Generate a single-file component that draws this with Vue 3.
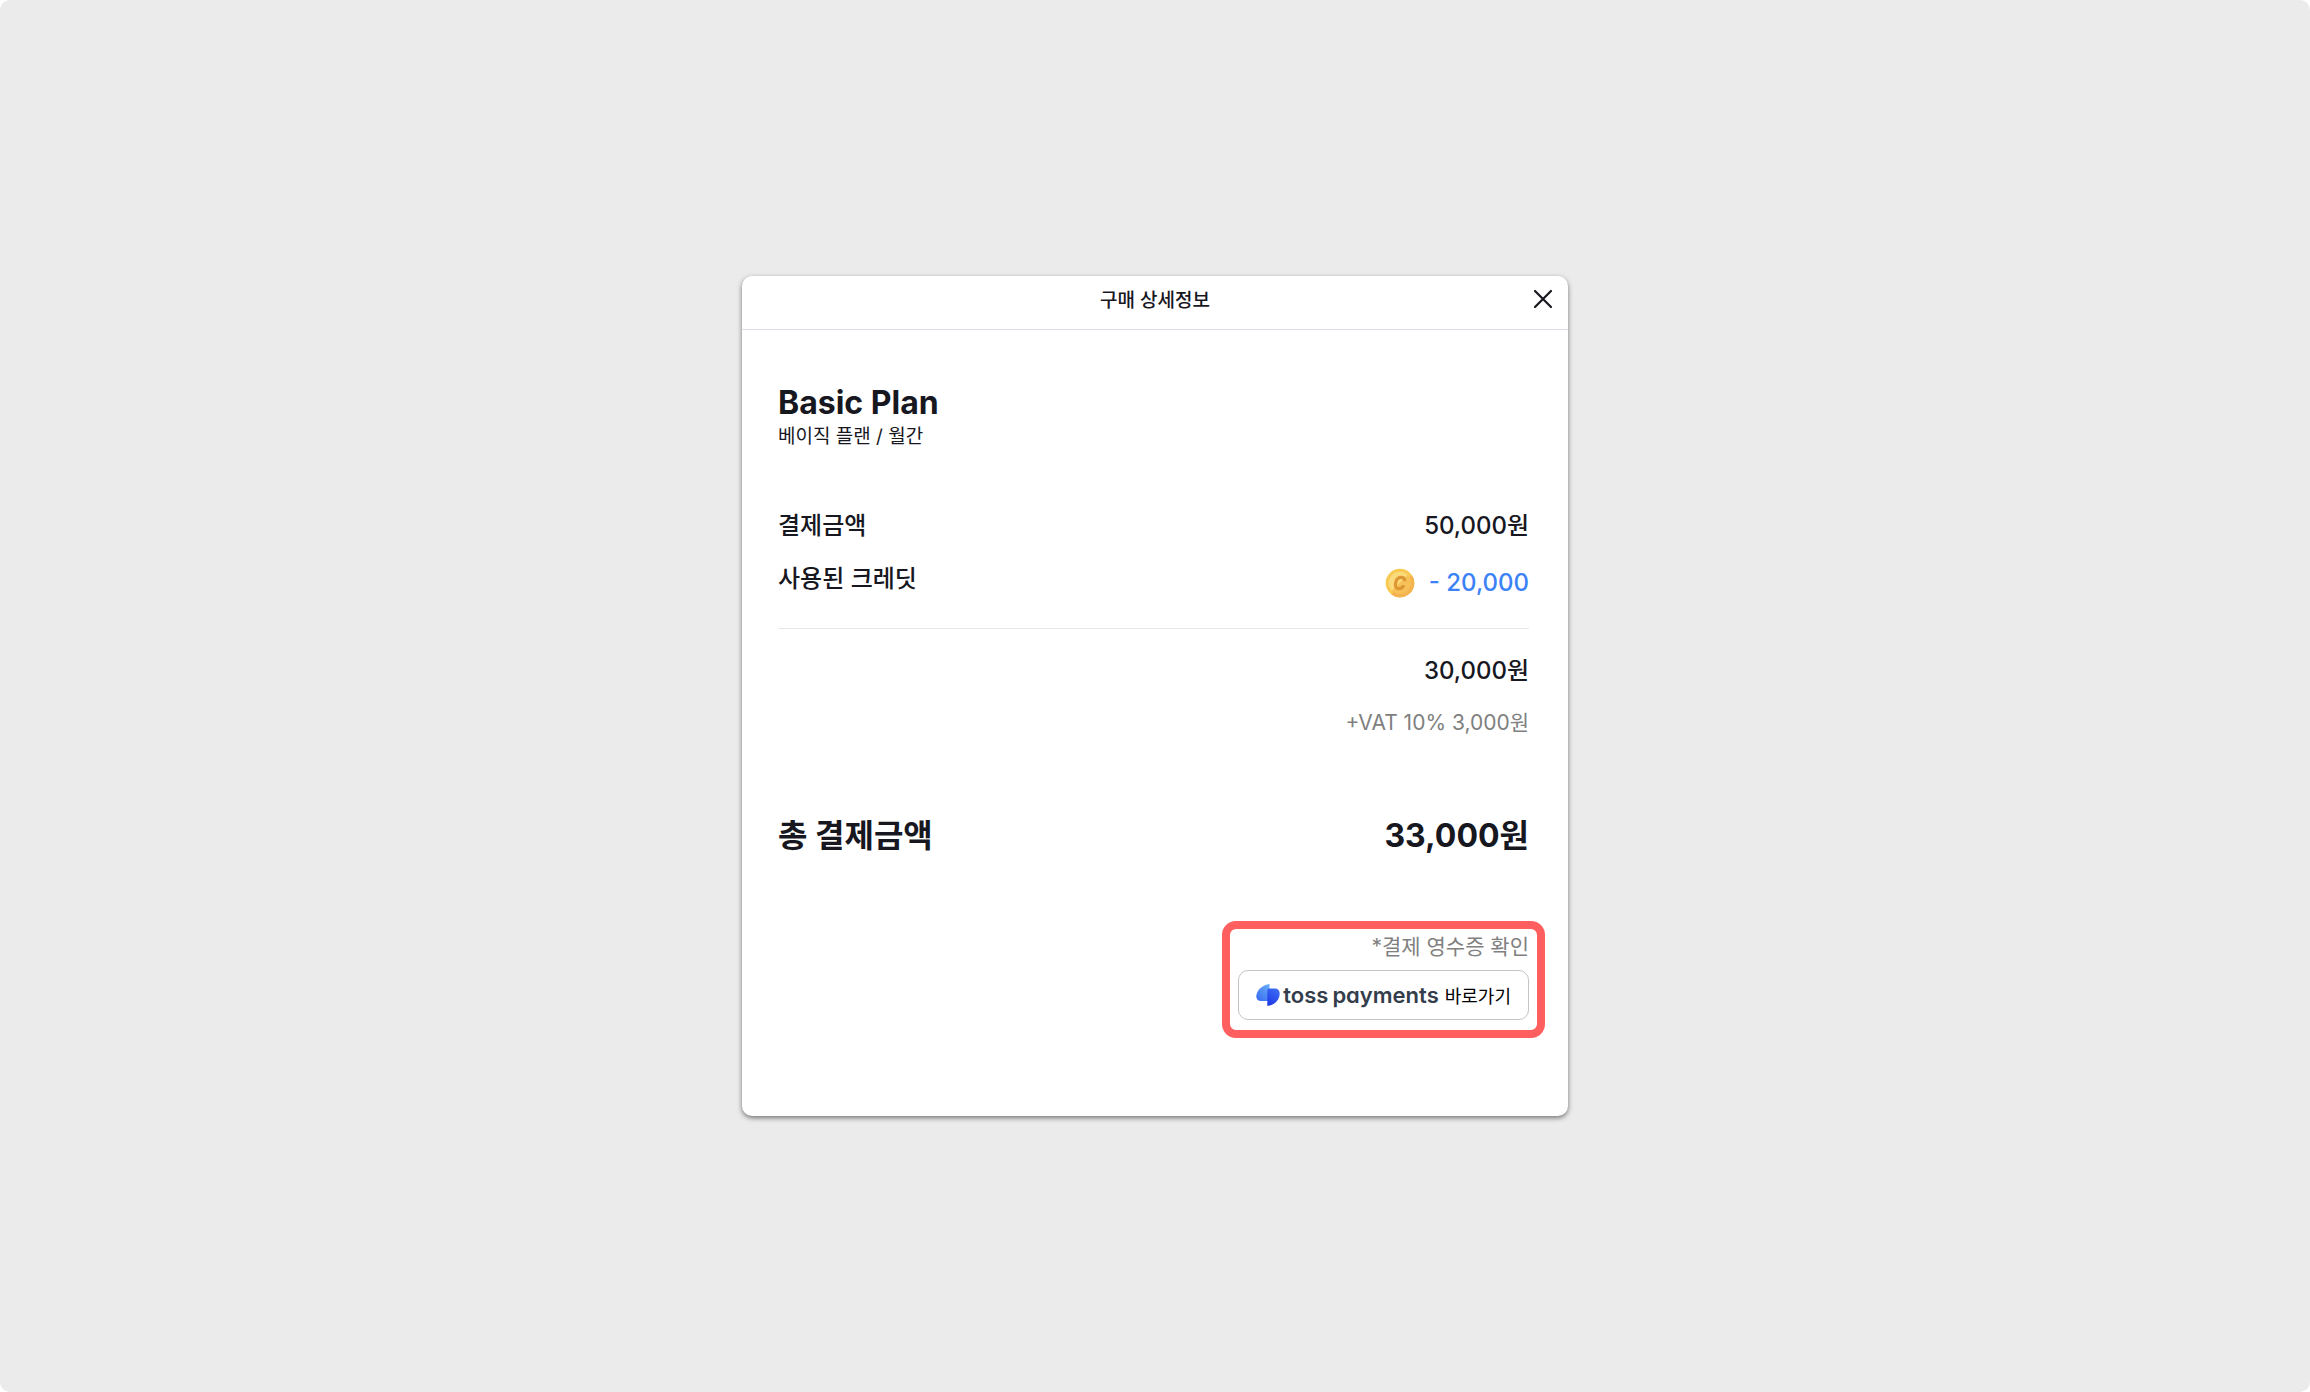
<script setup>
const plan = { name: 'Basic Plan', detail: '베이직 플랜 / 월간' }
const price = '50,000원'
const credit = '- 20,000'
const subtotal = '30,000원'
const vat = '+VAT 10% 3,000원'
const total = '33,000원'
</script>

<template>
  <div class="page">
    <section class="dialog" role="dialog" aria-labelledby="dialog-title">
      <header class="header">
        <h1 id="dialog-title" class="title">구매 상세정보</h1>
        <button class="close" type="button" aria-label="닫기">
          <svg width="20" height="20" viewBox="0 0 20 20" aria-hidden="true">
            <path d="M2 2L18 18M18 2L2 18" fill="none" stroke="#17171f" stroke-width="2.2" stroke-linecap="round" />
          </svg>
        </button>
      </header>

      <div class="body">
        <h2 class="plan">{{ plan.name }}</h2>
        <p class="detail">{{ plan.detail }}</p>

        <dl class="lines">
          <div class="row">
            <dt>결제금액</dt>
            <dd>{{ price }}</dd>
          </div>
          <div class="row">
            <dt>사용된 크레딧</dt>
            <dd class="credit">
              <svg width="30" height="30" viewBox="0 0 30 30" aria-hidden="true">
                <circle cx="15" cy="15" r="14.3" fill="#f8ca52" />
                <path d="M26.8 7A14.3 14.3 0 0 1 6 26.2Z" fill="#f5b350" />
                <circle cx="15" cy="15" r="11" fill="#f6bf58" />
                <path d="M22.6 7A11 11 0 1 0 7 22.6Z" fill="#fbda7c" />
                <path d="M19.6 13.2C19.8 10.4 18.3 9.4 16.2 9.4C12.7 9.4 10.9 12.6 10.5 15.8C10.1 19 11.3 20.7 13.8 20.7C16.2 20.7 17.9 19.6 18.7 17.3" fill="none" stroke="#dc9632" stroke-width="3.2" />
              </svg>
              <span>{{ credit }}</span>
            </dd>
          </div>
        </dl>

        <div class="sums">
          <p class="subtotal">{{ subtotal }}</p>
          <p class="vat">{{ vat }}</p>
        </div>

        <div class="total">
          <span>총 결제금액</span>
          <strong>{{ total }}</strong>
        </div>

        <div class="receipt">
          <p class="note">*결제 영수증 확인</p>
          <button class="toss" type="button">
            <svg width="24" height="24" viewBox="0 0 24 24" aria-hidden="true">
              <defs>
                <linearGradient id="toss-light" x1="0.9" y1="0" x2="0.2" y2="1">
                  <stop offset="0" stop-color="#67adf8" />
                  <stop offset="1" stop-color="#3a6df0" />
                </linearGradient>
                <linearGradient id="toss-dark" x1="0.8" y1="0" x2="0.3" y2="1">
                  <stop offset="0" stop-color="#3f6df5" />
                  <stop offset="1" stop-color="#1f3be6" />
                </linearGradient>
              </defs>
              <path d="M13.5 1V18H5C2 18 0.3 16.2 0.3 13.3C0.3 7.5 6.5 1.8 13.5 1Z" fill="url(#toss-light)" />
              <path d="M11.3 23V8C11.3 6.5 12.3 5.5 13.5 5.5H19C22 5.5 23.7 7.6 23.7 10.4C23.7 16.5 18.3 22.4 11.3 23Z" fill="url(#toss-dark)" />
            </svg>
            <span class="brand"><span>toss</span> <span>payments</span></span>
            <span class="go">바로가기</span>
          </button>
        </div>
      </div>
    </section>
  </div>
</template>

<style>
body {
  margin: 0;
  background: #fff;
}
</style>

<style scoped>
.page {
  display: grid;
  place-items: center;
  min-height: 100vh;
  border-radius: 10px;
  background: #ebebeb;
  color: #17171f;
  font-family: Inter, "Noto Sans CJK KR", sans-serif;
}

h1,
h2,
p,
dl,
dd {
  margin: 0;
}

button {
  font-family: inherit;
  cursor: pointer;
}

.dialog {
  width: 100%;
  max-width: 826px;
  border-radius: 10px;
  background: #fff;
  box-shadow: 0 2px 5px rgba(0, 0, 0, 0.5);
}

.header {
  display: grid;
  grid-template-columns: 50px 1fr 50px;
  align-items: start;
  height: 53px;
  border-bottom: 1px solid #dcdee5;
}

.title {
  grid-column: 2;
  font-size: 19px;
  font-weight: 500;
  line-height: 50px;
  text-align: center;
}

.close {
  display: grid;
  place-items: center;
  width: 50px;
  height: 46px;
  padding: 0;
  border: 0;
  background: none;
}

.body {
  padding: 53px 39px 96px 36px;
}

.plan {
  font-size: 32px;
  font-weight: 700;
  line-height: 40px;
}

.detail {
  font-size: 19px;
  line-height: 28px;
}

.lines {
  display: grid;
  gap: 21px;
  margin-top: 59px;
  padding-bottom: 25px;
  border-bottom: 1px solid #e6e6e6;
}

.row {
  display: flex;
  justify-content: space-between;
  font-size: 24px;
  font-weight: 500;
  line-height: 32px;
}

.credit {
  display: flex;
  align-items: center;
  gap: 14px;
  height: 40px;
  color: #3b82f6;
}

.sums {
  display: grid;
  gap: 20px;
  margin-top: 26px;
  line-height: 32px;
  text-align: right;
}

.subtotal {
  font-size: 24px;
  font-weight: 500;
}

.vat {
  color: #808080;
  font-size: 21px;
}

.total {
  display: flex;
  justify-content: space-between;
  margin-top: 77px;
  font-size: 32px;
  font-weight: 700;
  line-height: 40px;
}

.total strong {
  font-weight: inherit;
}

.receipt {
  position: relative;
  display: grid;
  justify-items: end;
  gap: 9px;
  width: fit-content;
  margin: 77px 0 0 auto;
}

.receipt::after {
  position: absolute;
  inset: -12px -16px -18px -16px;
  border: 8px solid #ff5f5f;
  border-radius: 14px;
  content: "";
  pointer-events: none;
}

.note {
  color: #808080;
  font-size: 21px;
  line-height: 28px;
}

.toss {
  display: flex;
  align-items: center;
  height: 50px;
  padding: 0 17px;
  border: 1px solid #c4c4c4;
  border-radius: 10px;
  background: #fff;
}

.brand {
  display: flex;
  gap: 4px;
  margin: 0 6px 0 3px;
  color: #333d4b;
  font-size: 22px;
  font-weight: 600;
  font-feature-settings: "cv11";
}

.go {
  color: #000;
  font-size: 18px;
}
</style>
